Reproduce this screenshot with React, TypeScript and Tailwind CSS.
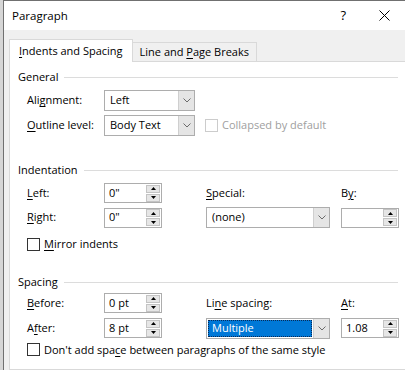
import type { ReactNode } from "react"

function Mn({ children }: { children: string }) {
  return <span className="underline decoration-1 underline-offset-[2px]">{children}</span>
}

function Chevron() {
  return (
    <svg width="8" height="5" viewBox="0 0 8 5">
      <path d="M0.5 0.5 L4 4 L7.5 0.5" fill="none" stroke="#6b6b6b" strokeWidth="1" />
    </svg>
  )
}

function Combo({ value, wide, selected }: { value: string; wide?: boolean; selected?: boolean }) {
  return (
    <div className={`flex h-[21px] border border-[#adadad] bg-white ${wide ? "w-[124px]" : "w-[91px]"}`}>
      <div className="flex-1 flex items-center p-[1px]">
        {selected ? (
          <div className="h-full w-full flex items-center pl-[3px] bg-[#0078d7] text-white border border-dotted border-[#0a2a55]">
            {value}
          </div>
        ) : (
          <span className="pl-[4px]">{value}</span>
        )}
      </div>
      <div className="w-[16px] bg-[#e5e5e5] border-l border-[#cfcfcf] flex items-center justify-center">
        <Chevron />
      </div>
    </div>
  )
}

function Spin({ value }: { value: string }) {
  return (
    <div className="flex h-[20px] w-[58px] border border-[#adadad] bg-white items-center">
      <div className="flex-1 pl-[4px]">{value}</div>
      <div className="flex flex-col gap-[1px] mr-[1px]">
        <div className="h-[8px] w-[14px] bg-[#e6e6e6] border border-[#c4c4c4] flex items-center justify-center">
          <svg width="5" height="3" viewBox="0 0 5 3">
            <path d="M2.5 0 L5 3 L0 3 Z" fill="#000" />
          </svg>
        </div>
        <div className="h-[8px] w-[14px] bg-[#e6e6e6] border border-[#c4c4c4] flex items-center justify-center">
          <svg width="5" height="3" viewBox="0 0 5 3">
            <path d="M0 0 L5 0 L2.5 3 Z" fill="#000" />
          </svg>
        </div>
      </div>
    </div>
  )
}

function Check({ children, disabled }: { children: ReactNode; disabled?: boolean }) {
  return (
    <div className={`flex items-center gap-[4px] ${disabled ? "text-[#a0a0a0]" : ""}`}>
      <div className={`w-[13px] h-[13px] bg-white border ${disabled ? "border-[#cccccc]" : "border-[#333333]"}`} />
      <span>{children}</span>
    </div>
  )
}

function Section({ title, className }: { title: string; className: string }) {
  return (
    <div className={`flex items-center h-[15px] w-[380px] ${className}`}>
      <span>{title}</span>
      <div className="flex-1 h-px bg-[#dcdcdc] ml-[6px]" />
    </div>
  )
}

export default function App() {
  return (
    <div className="w-[405px] h-[370px] overflow-hidden flex bg-[#e4e4e4] text-[11px] text-black font-['Open_Sans',sans-serif]">
      <div className="w-[3px] shrink-0 bg-[#d6d6d6]" />
      <div className="w-[410px] shrink-0 flex flex-col border-l border-t border-[#707070] bg-[#f0f0f0]">
        <div className="h-[29px] shrink-0 bg-white flex items-center pl-[8px]">
          <span className="text-[11.5px]">Paragraph</span>
          <span className="ml-auto text-[13px] mr-[33px]">?</span>
          <svg width="11" height="11" viewBox="0 0 11 11" className="mr-[23px]">
            <path d="M0.5 0.5 L10.5 10.5 M10.5 0.5 L0.5 10.5" stroke="#000" strokeWidth="1" />
          </svg>
        </div>

        <div className="flex items-end pl-[5px] pt-[8px]">
          <div className="h-[23px] px-[9px] flex items-center bg-white border border-b-0 border-[#d9d9d9] relative top-px z-10">
            <span>
              <Mn>I</Mn>ndents and Spacing
            </span>
          </div>
          <div className="h-[19px] px-[7px] flex items-center border border-l-0 border-b-0 border-[#d9d9d9]">
            <span>
              Line and <Mn>P</Mn>age Breaks
            </span>
          </div>
        </div>

        <div className="flex-1 ml-[5px] bg-white border border-[#d9d9d9] px-[8px]">
          <Section title="General" className="mt-[8px]" />
          <div className="pl-[9px]">
            <div className="flex items-center h-[21px] mt-[5px]">
              <div className="w-[77px]">
                Ali<Mn>g</Mn>nment:
              </div>
              <Combo value="Left" />
            </div>
            <div className="flex items-center h-[21px] mt-[4px]">
              <div className="w-[77px]">
                <Mn>O</Mn>utline level:
              </div>
              <Combo value="Body Text" />
              <div className="ml-[10px]">
                <Check disabled>Collapsed by default</Check>
              </div>
            </div>
          </div>

          <Section title="Indentation" className="mt-[27px]" />
          <div className="pl-[9px]">
            <div className="flex items-center h-[20px] mt-[5px]">
              <div className="w-[77px]">
                <Mn>L</Mn>eft:
              </div>
              <div className="w-[102px]">
                <Spin value={'0"'} />
              </div>
              <div className="w-[135px]">
                <Mn>S</Mn>pecial:
              </div>
              <div>
                B<Mn>y</Mn>:
              </div>
            </div>
            <div className="flex items-center h-[21px] mt-[4px]">
              <div className="w-[77px]">
                <Mn>R</Mn>ight:
              </div>
              <div className="w-[102px]">
                <Spin value={'0"'} />
              </div>
              <div className="w-[135px]">
                <Combo value="(none)" wide />
              </div>
              <Spin value="" />
            </div>
            <div className="mt-[8px]">
              <Check>
                <Mn>M</Mn>irror indents
              </Check>
            </div>
          </div>

          <Section title="Spacing" className="mt-[22px]" />
          <div className="pl-[9px]">
            <div className="flex items-center h-[21px] mt-[3px]">
              <div className="w-[77px]">
                <Mn>B</Mn>efore:
              </div>
              <div className="w-[102px]">
                <Spin value="0 pt" />
              </div>
              <div className="w-[135px]">
                Li<Mn>n</Mn>e spacing:
              </div>
              <div>
                <Mn>A</Mn>t:
              </div>
            </div>
            <div className="flex items-center h-[21px] mt-[4px]">
              <div className="w-[77px]">
                A<Mn>f</Mn>ter:
              </div>
              <div className="w-[102px]">
                <Spin value="8 pt" />
              </div>
              <div className="w-[135px]">
                <Combo value="Multiple" wide selected />
              </div>
              <Spin value="1.08" />
            </div>
            <div className="mt-[3px]">
              <Check>
                Don't add spa<Mn>c</Mn>e between paragraphs of the same style
              </Check>
            </div>
          </div>
        </div>
      </div>
    </div>
  )
}
